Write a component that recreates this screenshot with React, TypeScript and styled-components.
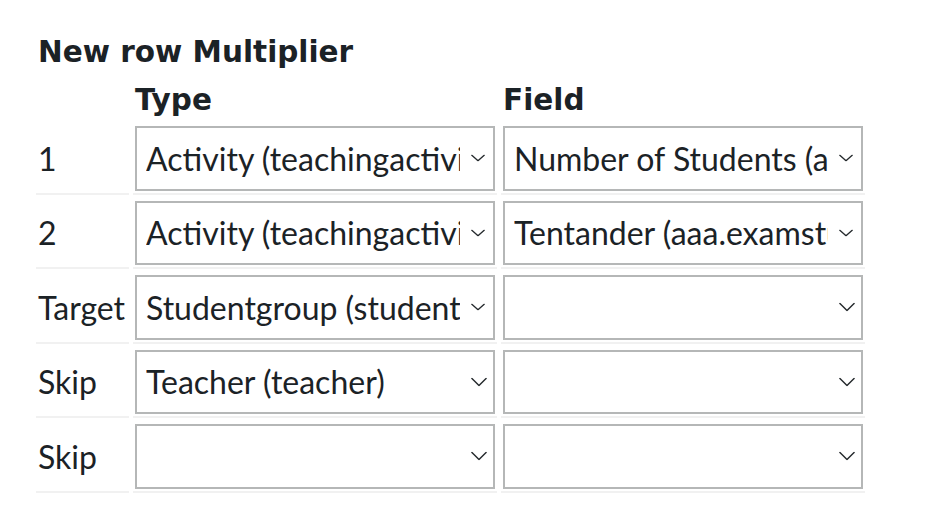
import React from "react";
import styled, { createGlobalStyle } from "styled-components";

const GlobalStyle = createGlobalStyle`
  html, body { margin: 0; padding: 0; background: #ffffff; }
  body { font-family: "Lato", "Noto Sans", sans-serif; color: #1b2226; }
`;

const Page = styled.div`
  padding: 32px 0 0 32px;
`;

const Title = styled.h3`
  margin: 0 0 0 6px;
  font-family: "DejaVu Sans", "Noto Sans", sans-serif;
  font-weight: 700;
  font-size: 29.5px;
  line-height: 40px;
  color: #1b2226;
`;

const Table = styled.table`
  border-collapse: separate;
  border-spacing: 4px;
  margin-top: 4px;
`;

const HeadCell = styled.th`
  padding: 2px;
  text-align: left;
  font-family: "DejaVu Sans", "Noto Sans", sans-serif;
  font-weight: 700;
  font-size: 29.5px;
  line-height: 36px;
  color: #1b2226;
`;

const Cell = styled.td<{ $w: number }>`
  width: ${(p) => p.$w}px;
  box-sizing: border-box;
  padding: 2px;
  border-bottom: 2px solid #f1f1f1;
  vertical-align: middle;
`;

const Label = styled(Cell)`
  font-size: 32px;
  color: #1b2226;
  white-space: nowrap;
`;

const SelectWrap = styled.div`
  position: relative;
  width: 100%;
`;

const Select = styled.select`
  appearance: none;
  -webkit-appearance: none;
  display: block;
  width: 100%;
  height: 64.5px;
  box-sizing: border-box;
  margin: 0;
  padding: 0 33px 0 9px;
  border: 2px solid #b5b7b7;
  border-radius: 0;
  background: #ffffff;
  font-family: "Lato", "Noto Sans", sans-serif;
  font-size: 32px;
  color: #1b2226;
  outline: none;
`;

const Chevron = styled.svg<{ $compact: boolean }>`
  position: absolute;
  top: 50%;
  right: ${(p) => (p.$compact ? 10 : 8)}px;
  width: ${(p) => (p.$compact ? 14 : 16)}px;
  height: ${(p) => (p.$compact ? 7 : 9)}px;
  transform: translateY(-50%);
  pointer-events: none;
`;

type Row = { label: string; type: string; field: string };

const rows: Row[] = [
  { label: "1", type: "Activity (teachingactivity)", field: "Number of Students (aaa.numberofstudents)" },
  { label: "2", type: "Activity (teachingactivity)", field: "Tentander (aaa.examstudents)" },
  { label: "Target", type: "Studentgroup (studentgroup)", field: "" },
  { label: "Skip", type: "Teacher (teacher)", field: "" },
  { label: "Skip", type: "", field: "" },
];

function Dropdown({ value }: { value: string }) {
  const compact = value.length > 20;
  return (
    <SelectWrap>
      <Select value={value} onChange={() => {}}>
        <option value="">{""}</option>
        {value && <option value={value}>{value}</option>}
      </Select>
      <Chevron $compact={compact} viewBox="0 0 17 9" preserveAspectRatio="none">
        <path d="M1 1 L8.5 8 L16 1" fill="none" stroke="#262b2e" strokeWidth="1.6" strokeLinecap="round" strokeLinejoin="round" />
      </Chevron>
    </SelectWrap>
  );
}

export default function App() {
  return (
    <>
      <GlobalStyle />
      <Page>
        <Title>New row Multiplier</Title>
        <Table>
          <thead>
            <tr>
              <HeadCell />
              <HeadCell>Type</HeadCell>
              <HeadCell>Field</HeadCell>
            </tr>
          </thead>
          <tbody>
            {rows.map((r, i) => (
              <tr key={i}>
                <Label $w={93}>{r.label}</Label>
                <Cell $w={364}>
                  <Dropdown value={r.type} />
                </Cell>
                <Cell $w={364}>
                  <Dropdown value={r.field} />
                </Cell>
              </tr>
            ))}
          </tbody>
        </Table>
      </Page>
    </>
  );
}
